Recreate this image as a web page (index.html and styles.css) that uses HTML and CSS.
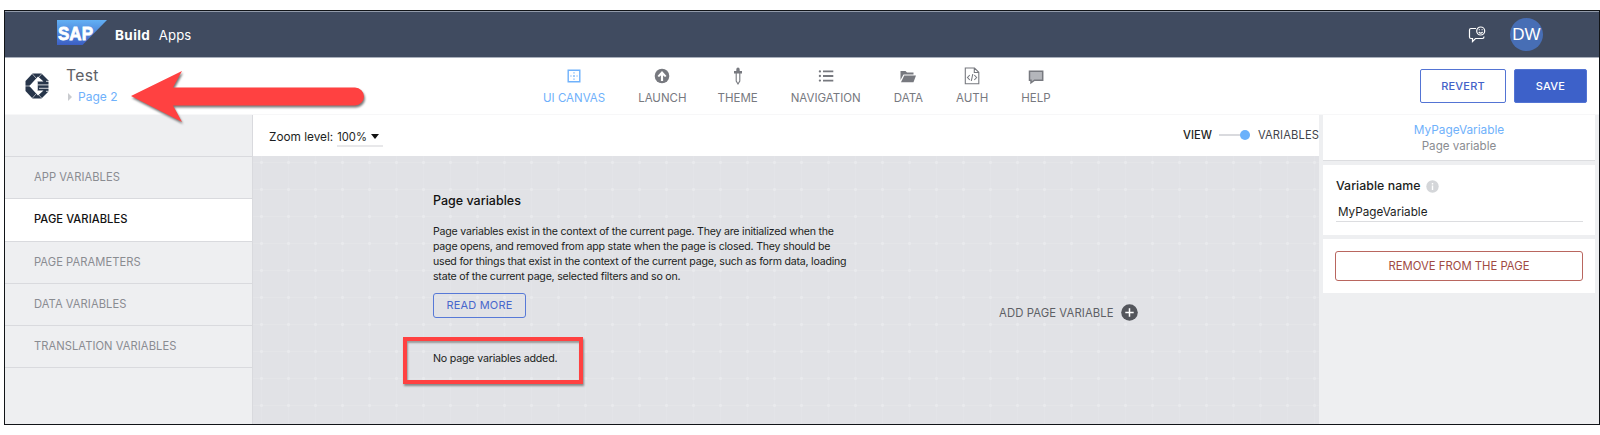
FILE: index.html
```html
<!DOCTYPE html>
<html lang="en">
<head>
<meta charset="utf-8">
<title>SAP Build Apps</title>
<link rel="stylesheet" href="styles.css">
</head>
<body>
<div class="window">
  <header class="shell">
    <div class="sap-logo">
      <svg width="50" height="25" viewBox="0 0 50 25">
        <defs><linearGradient id="sap" x1="0" y1="0" x2="0" y2="1"><stop offset="0" stop-color="#62b0f4"/><stop offset="1" stop-color="#3c5fc4"/></linearGradient></defs>
        <path d="M0 0H50L25.500 25H0Z" fill="url(#sap)"/>
        <text x="1" y="19.500" class="sap-text" textLength="35" lengthAdjust="spacingAndGlyphs">SAP</text>
      </svg>
    </div>
    <span class="brand"><b class="t brand-build">Build</b><span class="t brand-apps">Apps</span></span>
    <svg class="feedback" width="18" height="17" viewBox="0 0 18 17" fill="none" stroke="#fff" stroke-width="1.200">
      <path d="M8 2.500H3Q1.500 2.500 1.500 4V11Q1.500 12.500 3 12.500H4.500V15.500L7.500 12.500H14.500Q16 12.500 16 10.500"/>
      <circle cx="12.700" cy="5" r="4"/><path d="M10.800 6Q12.700 8.200 14.600 6M11.300 3.300V4.300M14.100 3.300V4.300"/>
    </svg>
    <span class="avatar">DW</span>
  </header>

  <div class="toolbar">
    <svg class="app-logo" width="24" height="26" viewBox="0 0 24 26">
      <path d="M7.500 0.500H16.500L23.500 7.500V18.500L16.500 25.500H7.500L0.500 18V8Z" fill="#27354a"/>
      <path d="M13 3.500L18.500 8.500H12.500V17.500H18.500L13 22.500L4.300 13Z" fill="#fff"/>
      <path d="M12.500 8.500V17.500L9.500 13Z" fill="#fff"/>
      <path d="M12.500 11.900H24M14 15.300H24M21 8.300H24M21 18.300H24" stroke="#fff" stroke-width=".8"/>
      <path d="M7 0.500L11 5M7 25.500L11 21M17 0.500L13.500 4.500M17 25.500L13.500 21.500M0 13H5" stroke="#fff" stroke-width=".6" fill="none"/>
    </svg>
    <div class="project">
      <span class="t project-name">Test</span>
      <span class="crumb"><i class="caret-right"></i><span class="t crumb-name">Page 2</span></span>
    </div>
    <nav class="tabs">
      <a class="tab tab-active"><svg class="tab-icon" viewBox="0 0 20 20"><path d="M4.200 4.200H15.800V15.800H4.200Z" fill="none" stroke="currentColor" stroke-width="1.400"/><path d="M10 6.300V13.700M6.300 10H13.700" stroke="currentColor" stroke-width="1.200" stroke-dasharray="1.300 1.750"/><path d="M9.400 10H10.600" stroke="currentColor" stroke-width="1.200"/></svg><span class="t">UI CANVAS</span></a>
      <a class="tab"><svg class="tab-icon" viewBox="0 0 20 20"><circle cx="10" cy="10" r="7.300" fill="currentColor"/><path d="M10 15V7" fill="none" stroke="#fff" stroke-width="2.200"/><path d="M5.500 10L10 5L14.500 10L13 11L10 8.500L7 11Z" fill="#fff"/></svg><span class="t">LAUNCH</span></a>
      <a class="tab tab-theme"><svg class="tab-icon" viewBox="0 0 20 20"><path d="M8.300 5V3.500Q8.300 1.500 10 1.500T11.700 3.500V5H14V7.500H6V5Z" fill="currentColor"/><path d="M8.200 7V15L10 18L11.800 15V7" fill="none" stroke="currentColor" stroke-width="1.100"/></svg><span class="t">THEME</span></a>
      <a class="tab"><svg class="tab-icon" viewBox="0 0 20 20" fill="currentColor"><path d="M7 4.500H17.300V6.300H7ZM7 9.100H17.300V10.900H7ZM7 13.700H17.300V15.500H7Z"/><circle cx="3.900" cy="5.400" r="1.150"/><circle cx="3.900" cy="10" r="1.150"/><circle cx="3.900" cy="14.600" r="1.150"/></svg><span class="t">NAVIGATION</span></a>
      <a class="tab"><svg class="tab-icon" viewBox="0 0 20 20" fill="currentColor"><path d="M2.500 5H7.500L9 6.500H15.500V8.500H5.500L2.500 14Z"/><path d="M6.200 9.500H18L15.500 16.200H3Z"/></svg><span class="t">DATA</span></a>
      <a class="tab"><svg class="tab-icon" viewBox="0 0 20 20" fill="none" stroke="currentColor" stroke-width="1.100"><path d="M3.300 2H12.500L16.800 6.300V17.700H3.300ZM12.300 2V6.500H16.800M7.800 9L5.500 11.500L7.800 14M12.300 9L14.600 11.500L12.300 14M10.800 8L9.300 15"/></svg><span class="t">AUTH</span></a>
      <a class="tab"><svg class="tab-icon" viewBox="0 0 20 20"><path d="M3.500 5.200H16.700V14.200H8.500L5 16.800V14.200H3.500Z" fill="#b4b6bb" stroke="currentColor" stroke-width="1.500"/></svg><span class="t">HELP</span></a>
    </nav>
    <div class="actions">
      <button class="btn btn-revert"><span class="t">REVERT</span></button>
      <button class="btn btn-save"><span class="t">SAVE</span></button>
    </div>
  </div>

  <div class="workspace">
    <aside class="sidebar">
      <div class="side-head"></div>
      <a class="side-item"><span class="t">APP VARIABLES</span></a>
      <a class="side-item side-active"><span class="t">PAGE VARIABLES</span></a>
      <a class="side-item"><span class="t">PAGE PARAMETERS</span></a>
      <a class="side-item"><span class="t">DATA VARIABLES</span></a>
      <a class="side-item"><span class="t">TRANSLATION VARIABLES</span></a>
    </aside>

    <main class="main">
      <div class="viewbar">
        <span class="t zoom-label">Zoom level:</span>
        <span class="zoom-value"><span class="t">100%</span><i class="caret-down"></i></span>
        <span class="t view-label">VIEW</span>
        <span class="switch"><i class="switch-knob"></i></span>
        <span class="t vars-label">VARIABLES</span>
      </div>
      <div class="canvas">
        <section class="intro">
          <h2 class="intro-title"><span class="t">Page variables</span></h2>
          <p class="intro-text">
            <span class="t">Page variables exist in the context of the current page. They are initialized when the</span>
            <span class="t">page opens, and removed from app state when the page is closed. They should be</span>
            <span class="t">used for things that exist in the context of the current page, such as form data, loading</span>
            <span class="t">state of the current page, selected filters and so on.</span>
          </p>
          <button class="read-more"><span class="t">READ MORE</span></button>
          <div class="empty"><span class="t">No page variables added.</span></div>
        </section>
        <div class="add"><span class="t">ADD PAGE VARIABLE</span>
          <svg width="17" height="17" viewBox="0 0 17 17"><circle cx="8.500" cy="8.500" r="8.300" fill="#54565c"/><path d="M8.500 4.300V12.700M4.300 8.500H12.700" stroke="#fff" stroke-width="1.500"/></svg>
        </div>
      </div>
    </main>

    <aside class="inspector">
      <div class="card card-head"><span class="t var-title">MyPageVariable</span><span class="t var-kind">Page variable</span></div>
      <div class="card card-name">
        <div class="field-label"><span class="t">Variable name</span><svg width="13" height="13" viewBox="0 0 13 13"><circle cx="6.500" cy="6.500" r="6.200" fill="#d4d6d9"/><path d="M6.500 5.500V10M6.500 3V4.500" stroke="#fff" stroke-width="1.400"/></svg></div>
        <div class="field-value"><span class="t">MyPageVariable</span></div>
      </div>
      <div class="card card-remove"><button class="remove"><span class="t">REMOVE FROM THE PAGE</span></button></div>
    </aside>
  </div>
</div>
<svg class="arrow" width="250" height="70" viewBox="0 0 250 70"><path d="M6 31L57 6L48 22.500H230A8.800 8.800 0 0 1 230 40.500H48L57 57Z" fill="#ff4141"/></svg>
</body>
</html>
```
FILE: styles.css
```css
* { box-sizing: border-box; }
body { margin: 0; width: 1600px; height: 435px; overflow: hidden; background: #fff; padding: 10px 0 0 4px; font-family: Inter, "Noto Sans", sans-serif; font-size: 11px; color: #1c1e22; }
button { font-family: inherit; padding: 0; margin: 0; background: none; }
.t { white-space: nowrap; display: block; }
.window { width: 1596px; height: 415px; border: 1px solid #111418; display: flex; flex-direction: column; overflow: hidden; }
.shell { height: 47px; flex: none; border-top: 1px solid #929baa; border-bottom: 1px solid #aab0bc; background: #404b60; display: flex; align-items: center; color: #fff; padding: 0 56px 0 52px; }
.sap-logo { height: 29px; }
.sap-text { font: bold 19px "Liberation Sans", sans-serif; fill: #fff; stroke: #fff; stroke-width: .8px; }
.brand { display: flex; align-items: baseline; gap: 8.500px; margin: 0 auto 0 8px; font-size: 13.200px; }
.brand-build { font-size: 13.500px; letter-spacing: .4px; }
.brand-apps { letter-spacing: .15px; }
.feedback { margin-right: 24px; }
.avatar { width: 33px; height: 33px; border-radius: 50%; background: #476eb5; font: 17px/34px "Liberation Sans", sans-serif; text-align: center; }
.toolbar { height: 57px; flex: none; display: flex; align-items: flex-start; background: #fff; color: #77797f; border-bottom: 1px solid #f7f7f8; }
.app-logo { margin: 15px 0 0 20px; }
.project { margin-left: 17px; width: 477px; color: #5e6066; }
.project-name { font-size: 15.700px; letter-spacing: .3px; line-height: 20px; margin-top: 8px; }
.crumb { display: flex; align-items: center; gap: 6px; color: #6fb1fb; font-size: 12px; line-height: 20px; margin-top: 1px; padding-left: 2px; }
.caret-right { border-left: 4px solid #c9cbcf; border-top: 4px solid transparent; border-bottom: 4px solid transparent; }
.tabs { display: flex; gap: 33px; margin-top: 8px; }
.tab { display: flex; flex-direction: column; align-items: center; font-size: 11.500px; }
.tab-icon { width: 20px; height: 20px; }
.tab .t { line-height: 16px; margin-top: 4px; }
.tab-active { color: #6fb1fb; }
.tab-theme { margin-left: -2px; }
.actions { display: flex; gap: 8px; margin: 11px 12px 0 auto; }
.btn { height: 34px; border-radius: 2px; border: 1px solid #5374d4; color: #4362c8; font-size: 11px; letter-spacing: .2px; display: flex; align-items: center; justify-content: center; font-weight: 500; }
.btn-revert { width: 86px; }
.btn-save { width: 73px; background: #3d61c9; color: #fff; }
.workspace { flex: 1; display: flex; min-height: 0; background: #eeeff1; }
.sidebar { width: 248px; flex: none; border-right: 1px solid #d9dade; }
.side-head { height: 42px; border-bottom: 1px solid #d9dade; }
.side-item { height: 42.300px; border-bottom: 1px solid #d9dade; padding: 0 0 1px 29px; display: flex; align-items: center; color: #8a8c91; font-size: 11.200px; letter-spacing: .05px; }
.side-active { background: #fff; color: #111; font-weight: 500; }
.main { width: 1066px; flex: none; display: flex; flex-direction: column; }
.viewbar { height: 41px; flex: none; background: #fff; display: flex; align-items: center; padding-left: 16px; font-size: 11.800px; }
.zoom-value { display: flex; align-items: center; gap: 4px; border-bottom: 2px solid #e8e8ea; height: 19px; margin: 4px auto 0 4px; width: 46px; font-size: 11.200px; }
.zoom-label { margin-top: 3px; }
.caret-down { border-top: 5px solid #111; border-left: 4px solid transparent; border-right: 4px solid transparent; }
.view-label, .vars-label { font-size: 11.200px; font-weight: 500; padding-bottom: 2px; }
.vars-label { color: #42444a; font-weight: 400; letter-spacing: .1px; }
.switch { width: 31px; height: 2px; background: #d9dade; margin: 0 8px 1px 7px; display: flex; align-items: center; justify-content: flex-end; }
.switch-knob { width: 10px; height: 10px; border-radius: 50%; background: #6bb1fb; flex: none; }
.canvas { flex: 1; background-color: #e1e2e6; background-image: radial-gradient(circle, #e9eaed 1px, transparent 2px), linear-gradient(#e4e5e8 1px, transparent 1px), linear-gradient(90deg, #e3e4e8 1px, transparent 1px); background-size: 27px 27px; background-position: -5px -7px, 8px 6px, 8px 6px; display: flex; align-items: flex-start; }
.intro { margin-left: 180px; width: 420px; padding-top: 36px; }
.intro-title { margin: 0; font-size: 12.500px; font-weight: 500; line-height: 18px; color: #111; }
.intro-text { margin: 15px 0 0; line-height: 14.900px; font-size: 10.600px; letter-spacing: -.22px; }
.read-more { margin-top: 8px; width: 93px; height: 25px; border: 1px solid #5779d7; border-radius: 3px; color: #4867cc; font-size: 11px; letter-spacing: .2px; display: flex; align-items: center; justify-content: center; }
.empty { width: 180px; height: 47px; border: 4px solid #ff4141; margin: 19px 0 0 -30px; padding: 0 0 3px 26px; display: flex; align-items: center; box-shadow: 1px 2px 2px #888, inset 1px 2px 2px #999; font-size: 10.700px; letter-spacing: -.22px; }
.add { display: flex; align-items: center; gap: 7.500px; margin: 148px 0 0 146px; color: #5d5f65; font-size: 11.300px; letter-spacing: .1px; }
.inspector { padding: 0 4px; flex: 1; display: flex; flex-direction: column; gap: 4px; }
.card { background: #fff; }
.card-head { height: 46px; border-bottom: 1px solid #dcdde0; display: flex; flex-direction: column; align-items: center; padding-top: 8px; line-height: 15.500px; font-size: 11.600px; color: #8a8c91; }
.var-title { color: #6fb1fb; font-size: 11.800px; }
.card-name { height: 70px; padding: 13px 12px 13px 13px; }
.field-label { display: flex; align-items: center; gap: 6px; font-size: 12.300px; letter-spacing: .05px; line-height: 16px; font-weight: 500; }
.field-value { border-bottom: 1px solid #dcdde0; height: 23px; margin-top: 5px; padding: 4px 0 0 2px; line-height: 19px; font-size: 11.700px; }
.card-remove { height: 54px; padding: 12px; }
.remove { width: 100%; height: 30px; border: 1px solid #b9665f; border-radius: 3px; color: #a04a43; font-size: 11.300px; display: flex; align-items: center; justify-content: center; }
.arrow { position: absolute; left: 125px; top: 65px; filter: drop-shadow(1px 2px 1px #777); }
```
